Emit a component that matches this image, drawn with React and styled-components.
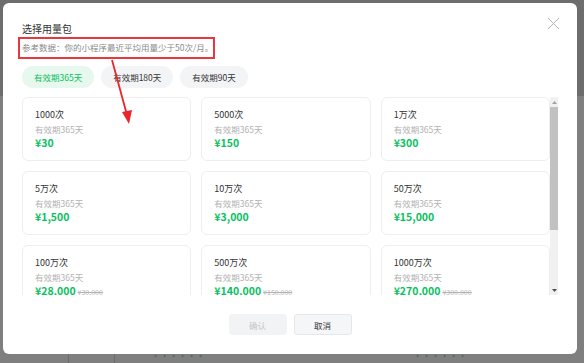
import React from 'react';
import styled, { createGlobalStyle } from 'styled-components';

const GlobalStyle = createGlobalStyle`
  html, body {
    margin: 0;
    padding: 0;
    width: 584px;
    height: 363px;
    overflow: hidden;
    font-family: "Noto Sans CJK SC", "Noto Sans", sans-serif;
  }
`;

const Page = styled.div`
  position: relative;
  width: 584px;
  height: 363px;
  background: #fff;
  overflow: hidden;
`;

const PageHeader = styled.div`
  height: 96px;
  background: #dadada;
`;

const PageRow = styled.div`
  display: flex;
  height: 267px;
  align-items: flex-end;
`;

const PageCell = styled.div`
  width: ${(p) => p.$w}px;
  height: 14px;
  border-left: ${(p) => (p.$line ? '1px solid #d6d6d6' : 'none')};
  color: #8fd9b0;
  font-size: 9px;
  line-height: 14px;
  padding-left: ${(p) => p.$pad || 0}px;
`;

const Overlay = styled.div`
  position: absolute;
  inset: 0;
  background: rgba(0, 0, 0, 0.5);
  display: flex;
  align-items: flex-start;
  padding: 3px;
`;

const Modal = styled.div`
  position: relative;
  width: 574px;
  height: 351px;
  box-sizing: border-box;
  background: #fff;
  border-radius: 6px;
  padding: 19px 19px 19px;
  display: flex;
  flex-direction: column;
`;

const Title = styled.div`
  font-size: 10px;
  line-height: 14px;
  color: #333;
`;

const Subtitle = styled.div`
  margin-top: 4px;
  font-size: 8.5px;
  line-height: 14px;
  color: #8a8a8a;
`;

const CloseButton = styled.button`
  position: absolute;
  top: 14px;
  right: 17px;
  width: 13px;
  height: 13px;
  padding: 0;
  border: none;
  background: transparent;
  cursor: pointer;
  display: flex;
`;

const Highlight = styled.div`
  position: absolute;
  left: 15px;
  top: 34px;
  width: 197px;
  height: 22px;
  box-sizing: border-box;
  border: 2px solid #e8383d;
  pointer-events: none;
`;

const Arrow = styled.svg`
  position: absolute;
  left: 100px;
  top: 54px;
  pointer-events: none;
`;

const Tabs = styled.div`
  margin-top: 12px;
  display: flex;
  gap: 7px;
`;

const Tab = styled.button`
  height: 22px;
  padding: 0 12px;
  border: none;
  border-radius: 11px;
  font-family: inherit;
  font-size: 8.5px;
  background: ${(p) => (p.$active ? '#e7f8ee' : '#f3f4f6')};
  color: ${(p) => (p.$active ? '#07c160' : '#333')};
  cursor: pointer;
`;

const ScrollArea = styled.div`
  margin-top: 9px;
  height: 198px;
  display: flex;
`;

const ScrollContent = styled.div`
  flex: 1;
  overflow: hidden;
`;

const ScrollTrack = styled.div`
  width: 8px;
  background: #f1f1f1;
  display: flex;
  flex-direction: column;
`;

const ScrollButton = styled.div`
  height: 10px;
  display: flex;
  align-items: center;
  justify-content: center;
`;

const ScrollThumbArea = styled.div`
  flex: 1;
`;

const ScrollThumb = styled.div`
  height: 123px;
  background: #c1c1c1;
`;

const Grid = styled.div`
  display: grid;
  grid-template-columns: repeat(3, 1fr);
  gap: 10px;
`;

const Card = styled.div`
  height: 64px;
  box-sizing: border-box;
  border: 1px solid #eeeeee;
  border-radius: 6px;
  padding: 10px 12px;
  display: flex;
  flex-direction: column;
`;

const CardTitle = styled.div`
  font-size: 9px;
  line-height: 14px;
  color: #333;
`;

const CardSub = styled.div`
  font-size: 8.5px;
  line-height: 14px;
  color: #b2b2b2;
`;

const PriceRow = styled.div`
  display: flex;
  align-items: baseline;
  gap: 2px;
  line-height: 14px;
`;

const Price = styled.span`
  font-size: 10.5px;
  font-weight: 700;
  color: #07c160;
`;

const OldPrice = styled.span`
  font-size: 7px;
  color: #b2b2b2;
  text-decoration: line-through;
`;

const Footer = styled.div`
  margin-top: 19px;
  display: flex;
  justify-content: center;
  gap: 7px;
`;

const FooterButton = styled.button`
  width: 58px;
  height: 21px;
  box-sizing: border-box;
  border-radius: 3px;
  font-family: inherit;
  font-size: 8.5px;
  border: 1px solid ${(p) => (p.$disabled ? '#f2f3f5' : '#e6e7ea')};
  background: ${(p) => (p.$disabled ? '#f2f3f5' : '#f5f6f8')};
  color: ${(p) => (p.$disabled ? '#c4c6ca' : '#333')};
  cursor: ${(p) => (p.$disabled ? 'not-allowed' : 'pointer')};
`;

const packages = [
  { name: '1000次', price: '¥30' },
  { name: '5000次', price: '¥150' },
  { name: '1万次', price: '¥300' },
  { name: '5万次', price: '¥1,500' },
  { name: '10万次', price: '¥3,000' },
  { name: '50万次', price: '¥15,000' },
  { name: '100万次', price: '¥28,000', old: '¥30,000' },
  { name: '500万次', price: '¥140,000', old: '¥150,000' },
  { name: '1000万次', price: '¥270,000', old: '¥300,000' },
  { name: '5000万次', price: '¥1,200,000', old: '¥1,500,000' },
  { name: '1亿次', price: '¥2,000,000', old: '¥3,000,000' },
];

const tabs = ['有效期365天', '有效期180天', '有效期90天'];

export default function App() {
  return (
    <Page>
      <GlobalStyle />
      <PageHeader />
      <PageRow>
        <PageCell $w={68} />
        <PageCell $w={45} $line />
        <PageCell $w={262} $line $pad={36}>······</PageCell>
        <PageCell $w={100}>······</PageCell>
      </PageRow>

      <Overlay>
        <Modal>
          <Title>选择用量包</Title>
          <Subtitle>参考数据：你的小程序最近平均用量少于50次/月。</Subtitle>
          <CloseButton aria-label="关闭">
            <svg width="13" height="13" viewBox="0 0 13 13">
              <path d="M1 1L12 12M12 1L1 12" stroke="#b3b3b3" strokeWidth="1" fill="none" />
            </svg>
          </CloseButton>

          <Tabs>
            {tabs.map((t, i) => (
              <Tab key={t} $active={i === 0}>{t}</Tab>
            ))}
          </Tabs>

          <ScrollArea>
            <ScrollContent>
              <Grid>
                {packages.map((p) => (
                  <Card key={p.name}>
                    <CardTitle>{p.name}</CardTitle>
                    <CardSub>有效期365天</CardSub>
                    <PriceRow>
                      <Price>{p.price}</Price>
                      {p.old && <OldPrice>{p.old}</OldPrice>}
                    </PriceRow>
                  </Card>
                ))}
              </Grid>
            </ScrollContent>
            <ScrollTrack>
              <ScrollButton>
                <svg width="5" height="3" viewBox="0 0 5 3"><path d="M2.5 0L5 3H0z" fill="#a3a3a3" /></svg>
              </ScrollButton>
              <ScrollThumbArea>
                <ScrollThumb />
              </ScrollThumbArea>
              <ScrollButton>
                <svg width="5" height="3" viewBox="0 0 5 3"><path d="M0 0H5L2.5 3z" fill="#505050" /></svg>
              </ScrollButton>
            </ScrollTrack>
          </ScrollArea>

          <Footer>
            <FooterButton $disabled>确认</FooterButton>
            <FooterButton>取消</FooterButton>
          </Footer>

          {/* 标注 */}
          <Highlight />
          <Arrow width="40" height="72" viewBox="0 0 40 72">
            <line x1="9" y1="3" x2="24" y2="58" stroke="#e8262b" strokeWidth="1.8" />
            <path d="M26 67L19 55L29 53Z" fill="#e8262b" />
          </Arrow>
        </Modal>
      </Overlay>
    </Page>
  );
}
